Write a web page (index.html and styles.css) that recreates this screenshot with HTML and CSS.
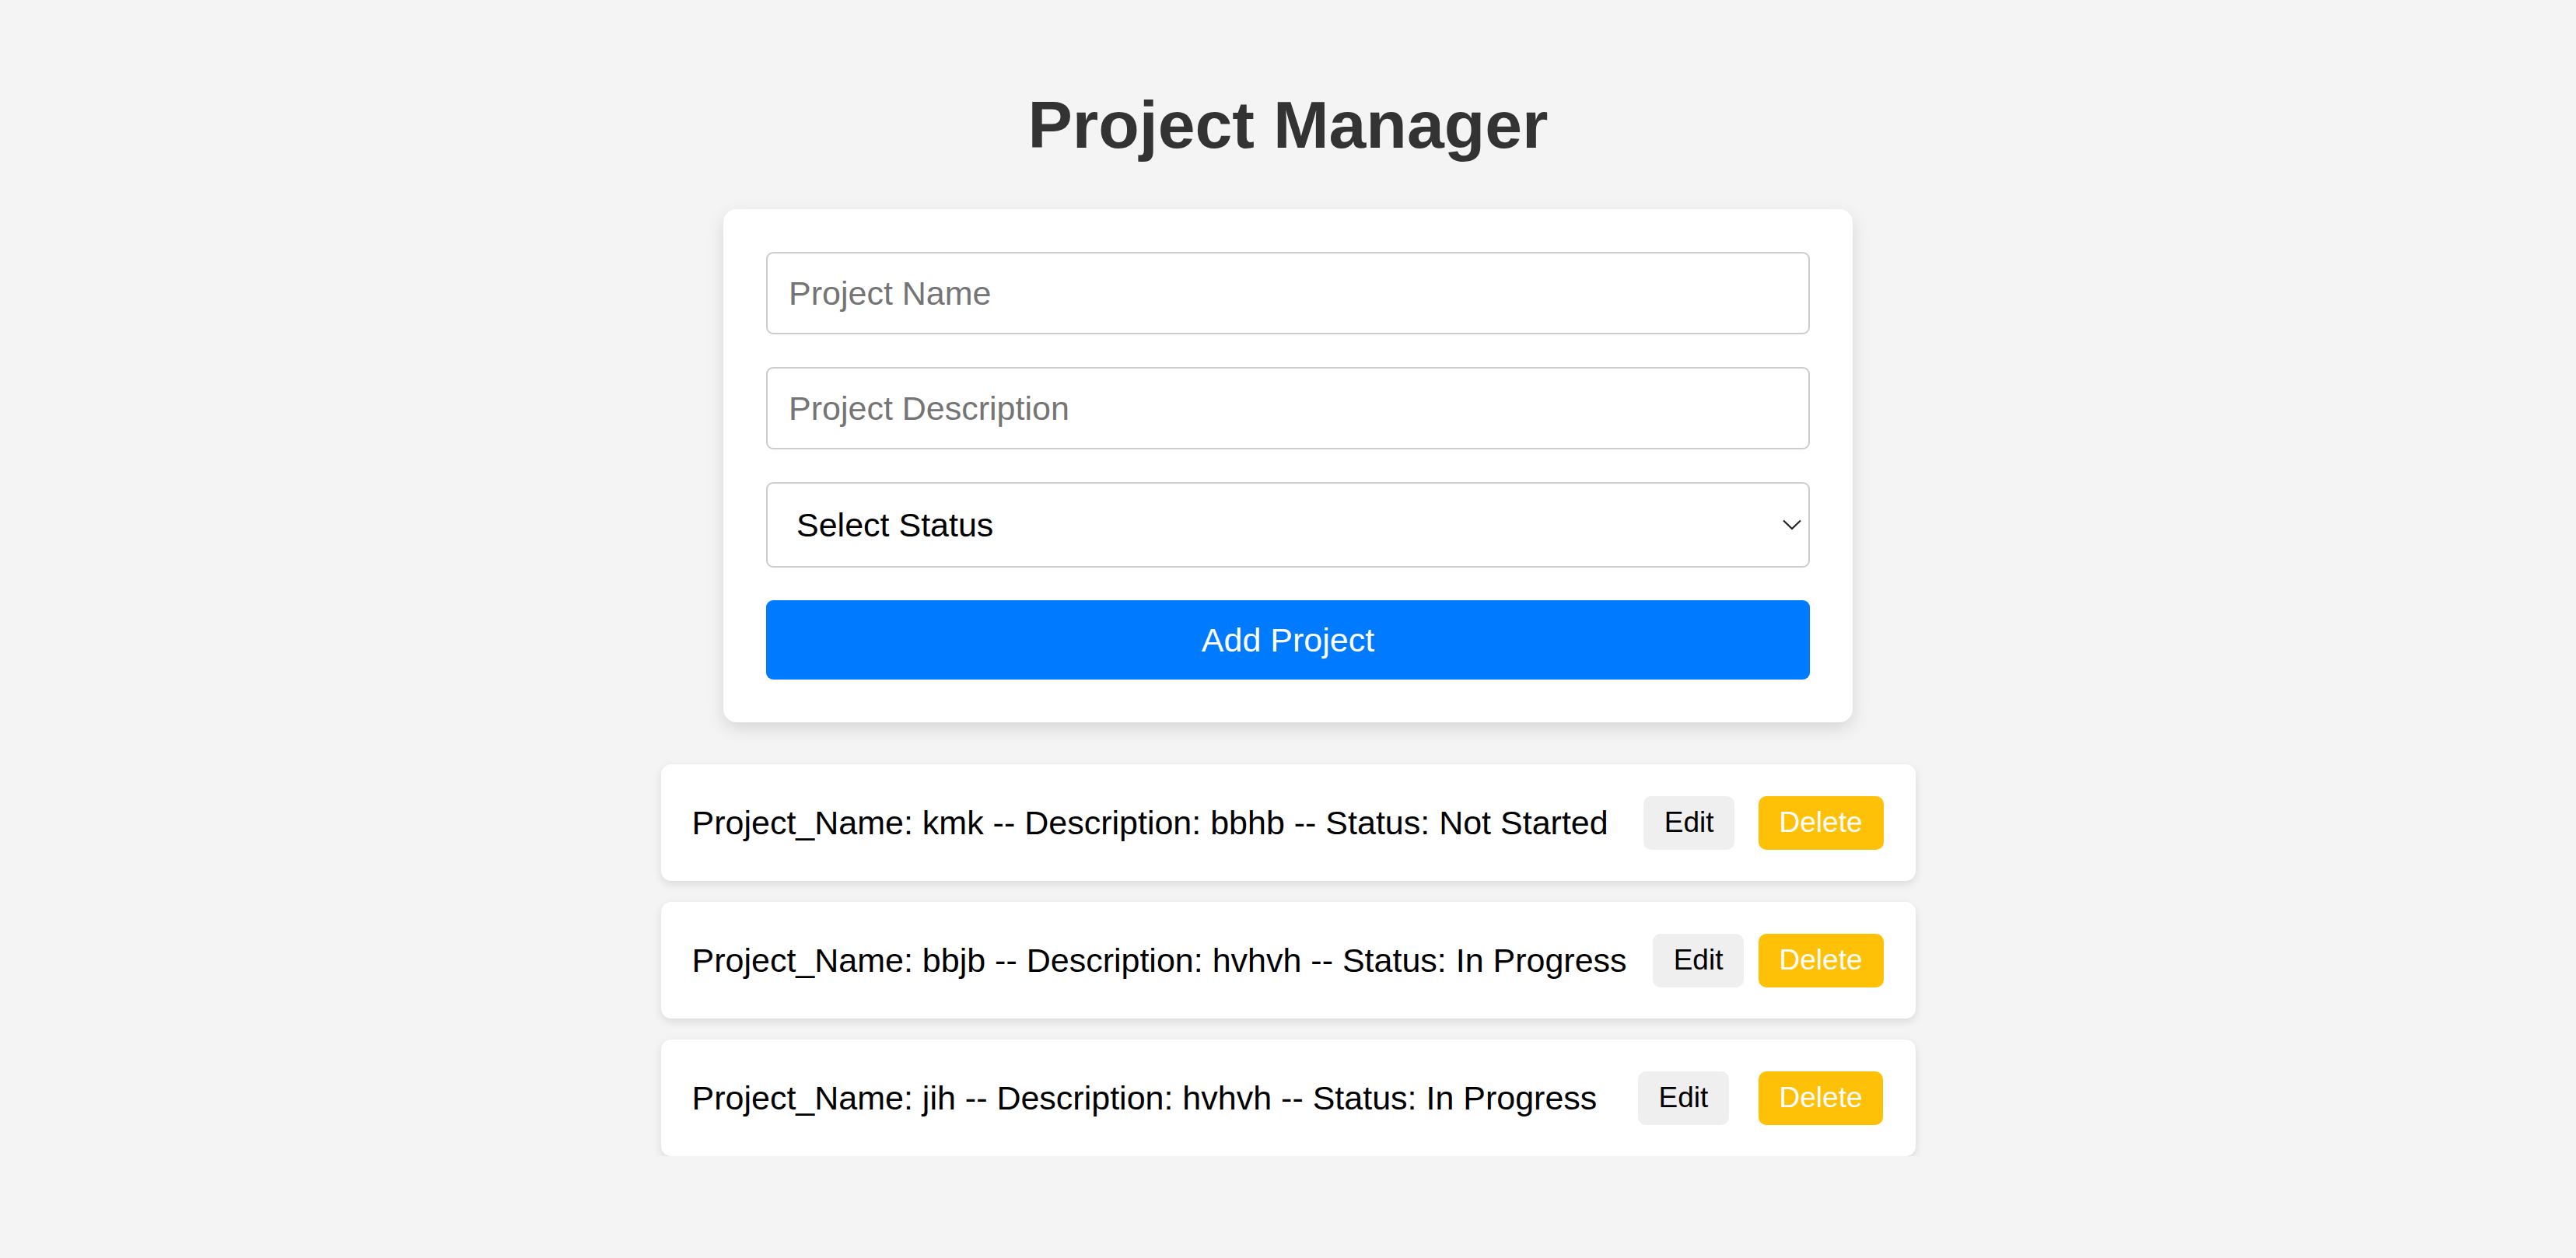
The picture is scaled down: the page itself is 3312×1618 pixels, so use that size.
FILE: index.html
```html
<!DOCTYPE html>
<html lang="en">
<head>
<meta charset="utf-8">
<title>Project Manager</title>
<link rel="stylesheet" href="styles.css">
</head>
<body>
<div class="app">
  <h1 class="title">Project Manager</h1>
  <form class="form-card">
    <input class="field" type="text" placeholder="Project Name">
    <input class="field" type="text" placeholder="Project Description">
    <div class="select-wrap">
      <select class="field select">
        <option>Select Status</option>
        <option>Not Started</option>
        <option>In Progress</option>
        <option>Completed</option>
      </select>
      <svg class="chevron" width="24" height="14" viewBox="0 0 24 14" aria-hidden="true"><path d="M1 1.5 L12 12 L23 1.5" fill="none" stroke="#222" stroke-width="2.2"/></svg>
    </div>
    <button class="add-btn" type="button">Add Project</button>
  </form>
  <ul class="list">
    <li class="row">
      <span class="row-text">Project_Name: kmk -- Description: bbhb -- Status: Not Started</span>
      <button class="btn edit" type="button">Edit</button>
      <button class="btn delete" type="button">Delete</button>
    </li>
    <li class="row">
      <span class="row-text">Project_Name: bbjb -- Description: hvhvh -- Status: In Progress</span>
      <button class="btn edit" type="button">Edit</button>
      <button class="btn delete" type="button">Delete</button>
    </li>
    <li class="row">
      <span class="row-text">Project_Name: jih -- Description: hvhvh -- Status: In Progress</span>
      <button class="btn edit" type="button">Edit</button>
      <button class="btn delete" type="button">Delete</button>
    </li>
  </ul>
</div>
</body>
</html>
```

FILE: styles.css
```css
html, body {
  margin: 0;
  padding: 0;
  background: #f4f4f4;
  font-family: "Liberation Sans", Arial, sans-serif;
}

.app {
  display: flex;
  flex-direction: column;
  align-items: center;
}

.title {
  margin: 111px 0 59px;
  font-size: 86px;
  font-weight: bold;
  color: #333;
  line-height: normal;
}

.form-card {
  box-sizing: border-box;
  width: 1452px;
  padding: 55px;
  background: #fff;
  border-radius: 17px;
  box-shadow: 0 8px 22px rgba(0, 0, 0, 0.12);
  display: flex;
  flex-direction: column;
  gap: 42px;
}

.field {
  box-sizing: border-box;
  display: block;
  width: 100%;
  height: 106px;
  margin: 0;
  padding: 0 27px;
  border: 2px solid #ccc;
  border-radius: 9px;
  background: #fff;
  font-family: "Liberation Sans", Arial, sans-serif;
  font-size: 43px;
  color: #000;
  outline: none;
}

.field::placeholder {
  color: #757575;
}

.select-wrap {
  position: relative;
}

.select {
  height: 110px;
  padding-left: 37px;
  appearance: none;
  -webkit-appearance: none;
}

.chevron {
  position: absolute;
  right: 11px;
  top: 48px;
  pointer-events: none;
}

.add-btn {
  display: block;
  width: 100%;
  height: 102px;
  border: none;
  border-radius: 9px;
  background: #007bff;
  color: #fff;
  font-family: "Liberation Sans", Arial, sans-serif;
  font-size: 43px;
}

.list {
  list-style: none;
  margin: 54px 0 0;
  padding: 0;
  width: 1613px;
  display: flex;
  flex-direction: column;
  gap: 27px;
}

.row {
  box-sizing: border-box;
  height: 150px;
  padding: 0 41px 0 40px;
  background: #fff;
  border-radius: 13px;
  box-shadow: 0 4px 12px rgba(0, 0, 0, 0.11);
  display: flex;
  align-items: center;
  justify-content: space-between;
}

.row-text {
  font-size: 43px;
  color: #000;
  white-space: nowrap;
}

.btn {
  height: 69px;
  padding: 0 27px;
  border: none;
  border-radius: 10px;
  font-family: "Liberation Sans", Arial, sans-serif;
  font-size: 37px;
}

.edit {
  margin-left: 15px;
  background: #efefef;
  color: #000;
}

.delete {
  background: #ffc107;
  color: #fff;
}
```
